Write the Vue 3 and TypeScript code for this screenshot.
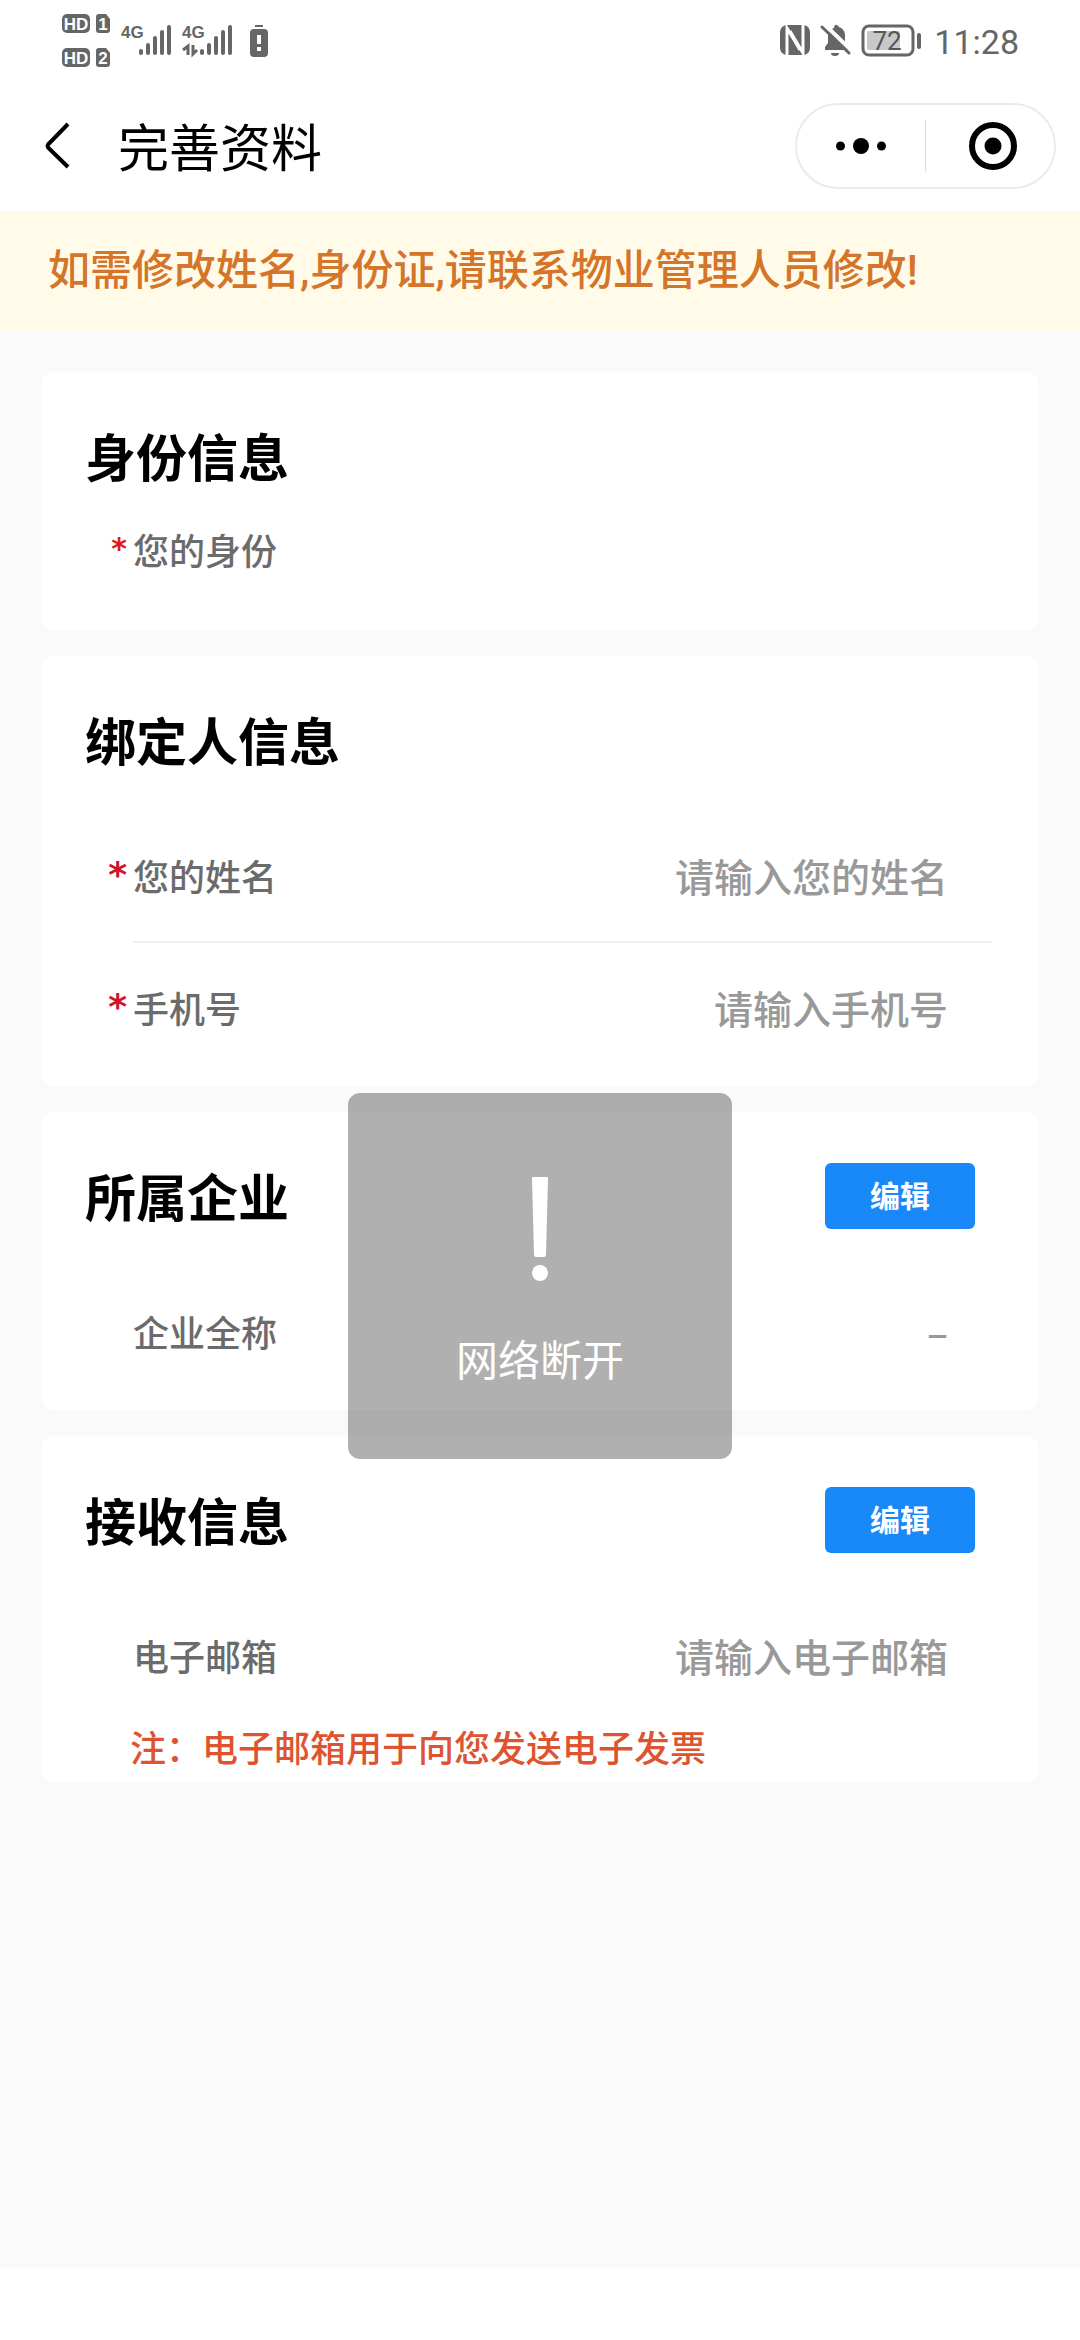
<script setup lang="ts">
import { ref } from 'vue'

interface Field {
  id: string
  label: string
  required?: boolean
  placeholder?: string
  value?: string
}

interface Section {
  title: string
  editable?: boolean
  compact?: boolean
  note?: string
  fields: Field[]
}

const sections: Section[] = [
  {
    title: '身份信息',
    compact: true,
    fields: [{ id: 'identity', label: '您的身份', required: true }],
  },
  {
    title: '绑定人信息',
    fields: [
      { id: 'name', label: '您的姓名', required: true, placeholder: '请输入您的姓名' },
      { id: 'phone', label: '手机号', required: true, placeholder: '请输入手机号' },
    ],
  },
  {
    title: '所属企业',
    editable: true,
    fields: [{ id: 'company', label: '企业全称', value: '–' }],
  },
  {
    title: '接收信息',
    editable: true,
    note: '注：电子邮箱用于向您发送电子发票',
    fields: [{ id: 'email', label: '电子邮箱', placeholder: '请输入电子邮箱' }],
  },
]

const form = ref<Record<string, string>>({ name: '', phone: '', email: '' })
const barTops = [49, 43, 36, 30, 25]
</script>

<template>
  <div class="app">
    <header>
      <div class="status">
        <svg class="status-left" width="220" height="80" viewBox="60 0 220 80">
          <g fill="#666">
            <rect x="62" y="14" width="28" height="19" rx="5" />
            <rect x="62" y="48" width="28" height="19" rx="5" />
            <path d="M99 14h7l4 5v11a3 3 0 0 1-3 3h-8a3 3 0 0 1-3-3V17a3 3 0 0 1 3-3z" />
            <path d="M99 48h7l4 5v11a3 3 0 0 1-3 3h-8a3 3 0 0 1-3-3V51a3 3 0 0 1 3-3z" />
          </g>
          <g class="tiny" fill="#fff" text-anchor="middle">
            <text x="76" y="30">HD</text>
            <text x="76" y="64">HD</text>
            <text x="103" y="30">1</text>
            <text x="103" y="64">2</text>
          </g>
          <g class="net" fill="#666">
            <text x="121" y="38">4G</text>
            <text x="182" y="38">4G</text>
          </g>
          <g stroke="#666" stroke-width="4" stroke-linecap="round">
            <line v-for="(t, i) in barTops" :key="'a' + i" :x1="141 + i * 7" :x2="141 + i * 7" :y1="t + 2" y2="53" />
            <line v-for="(t, i) in barTops" :key="'b' + i" :x1="202 + i * 7" :x2="202 + i * 7" :y1="t + 2" y2="53" />
          </g>
          <path d="M183 50l5-4v9M193 45v9l4-4" fill="none" stroke="#666" stroke-width="3" />
          <rect x="255" y="25" width="8" height="2" fill="#666" />
          <rect x="250" y="29" width="18" height="28" rx="4" fill="#666" />
          <path d="M257 35h4v9h-4zM257 47h4v4h-4z" fill="#fff" />
        </svg>
        <div class="status-right">
          <svg width="146" height="80" viewBox="778 0 146 80">
            <rect x="780" y="25" width="30" height="30" rx="7" fill="#666" />
            <path d="M787 55V28L800 50" fill="none" stroke="#fff" stroke-width="3" />
            <path d="M803 25V53L790 31" fill="none" stroke="#fff" stroke-width="3" />
            <path d="M825 50v-3l3-4v-7c0-4 3-7 6-8 0-4 3-4 5-1 5 2 6 5 6 9v7l3 4v3z" fill="#666" />
            <path d="M831 53h8a4 3 0 0 1-8 0z" fill="#666" />
            <path d="M824 24l28 27" stroke="#fff" stroke-width="4" />
            <path d="M822 27l27 26" stroke="#666" stroke-width="3" stroke-linecap="round" />
            <rect x="863" y="26" width="50" height="29" rx="6" fill="#fff" stroke="#666" stroke-width="3" />
            <rect x="867" y="31" width="33" height="19" rx="2" fill="#c8c8c8" />
            <rect x="917" y="33" width="4" height="16" rx="2" fill="#666" />
            <text class="level" x="887" y="50" text-anchor="middle" fill="#555">72</text>
          </svg>
          <time>11:28</time>
        </div>
      </div>
      <div class="nav">
        <button class="back" type="button" aria-label="返回">
          <svg width="28" height="48" viewBox="0 0 28 48">
            <path d="M24 2L4 22.500q-1 1.500 0 3L24 45" fill="none" stroke="#000" stroke-width="4" />
          </svg>
        </button>
        <h1>完善资料</h1>
        <div class="capsule">
          <button type="button" aria-label="更多">
            <svg width="52" height="18" viewBox="0 0 52 18">
              <circle cx="5.500" cy="9" r="4.500" />
              <circle cx="26" cy="9" r="8" />
              <circle cx="46.500" cy="9" r="4.500" />
            </svg>
          </button>
          <i class="split"></i>
          <button class="close" type="button" aria-label="关闭">
            <svg width="48" height="48" viewBox="0 0 48 48">
              <circle cx="24" cy="24" r="21" fill="none" stroke="#000" stroke-width="6" />
              <circle cx="24" cy="24" r="8.500" />
            </svg>
          </button>
        </div>
      </div>
    </header>

    <main>
      <p class="notice">如需修改姓名,身份证,请联系物业管理人员修改!</p>
      <form class="cards" @submit.prevent>
        <section v-for="s in sections" :key="s.title" class="card" :class="{ compact: s.compact }">
          <div class="head">
            <h2>{{ s.title }}</h2>
            <button v-if="s.editable" type="button" class="edit">编辑</button>
          </div>
          <div class="fields">
            <div v-for="f in s.fields" :key="f.id" class="row">
              <span class="star">{{ f.required ? '*' : '' }}</span>
              <div class="body">
                <label v-if="f.placeholder" :for="f.id">{{ f.label }}</label>
                <span v-else class="label">{{ f.label }}</span>
                <input v-if="f.placeholder" :id="f.id" v-model="form[f.id]" type="text" :placeholder="f.placeholder" />
                <span v-else-if="f.value" class="value">{{ f.value }}</span>
              </div>
            </div>
          </div>
          <p v-if="s.note" class="note">{{ s.note }}</p>
        </section>
      </form>

      <div class="overlay">
        <div class="toast" role="alert">
          <svg width="20" height="106" viewBox="0 0 20 106">
            <path d="M3 1h14q1 0 1 1l-2 77q0 2-2 2H6q-2 0-2-2L2 2q0-1 1-1z" fill="#fff" />
            <circle cx="10" cy="97" r="8" fill="#fff" />
          </svg>
          <span>网络断开</span>
        </div>
      </div>
    </main>
  </div>
</template>

<style>
body {
  margin: 0;
  background: #fff;
}
</style>

<style scoped>
.app {
  display: flex;
  flex-direction: column;
  min-height: 100vh;
  font-family: "Noto Sans CJK SC", "Noto Sans", sans-serif;
  color: #000;
}
h1, h2, p {
  margin: 0;
}
button {
  padding: 0;
  border: 0;
  background: none;
  font-family: inherit;
}
svg {
  display: block;
}
.status {
  display: flex;
  justify-content: space-between;
  height: 81px;
  padding: 0 61px 0 60px;
}
.status-right {
  display: flex;
  gap: 10px;
}
.status time {
  font: 34px/84px Roboto, sans-serif;
  color: #666;
}
.tiny {
  font: bold 17px "Liberation Sans Narrow", sans-serif;
}
.net {
  font: bold 17px "Liberation Sans Narrow", sans-serif;
}
.level {
  font: 26px Roboto, sans-serif;
}
.nav {
  display: flex;
  align-items: center;
  height: 130px;
  padding: 0 24px 0 44px;
}
.back {
  margin-right: 46px;
}
h1 {
  flex: 1;
  padding-bottom: 2px;
  font-size: 51px;
  line-height: 70px;
  font-weight: 400;
}
.capsule {
  display: flex;
  align-items: center;
  box-sizing: border-box;
  width: 261px;
  height: 86px;
  border: 2px solid #ebebeb;
  border-radius: 43px;
}
.capsule button {
  flex: 1;
  display: flex;
  justify-content: center;
}
.close svg {
  margin-left: 6px;
}
.split {
  width: 1px;
  height: 52px;
  background: #ddd;
}
main {
  position: relative;
  flex: 1;
  display: flex;
  flex-direction: column;
  padding-bottom: 72px;
}
.notice {
  padding: 24px 48px;
  background: #fffbe8;
  color: #d4752a;
  font-family: Roboto, "Noto Sans CJK SC", sans-serif;
  font-size: 42px;
  font-weight: 500;
  line-height: 72px;
}
.cards {
  flex: 1;
  display: flex;
  flex-direction: column;
  gap: 26px;
  padding: 41px 42px;
  background: #fafafa;
}
.card {
  padding: 48px 0 11px;
  background: #fff;
  border-radius: 12px;
}
.head {
  display: flex;
  align-items: center;
  justify-content: space-between;
  padding: 0 63px 0 43px;
}
h2 {
  padding-bottom: 2px;
  font-size: 51px;
  line-height: 70px;
  font-weight: 700;
}
.edit {
  width: 150px;
  height: 66px;
  padding-bottom: 5px;
  border-radius: 6px;
  background: #1989fa;
  color: #fff;
  font-size: 30px;
  font-weight: 700;
}
.fields {
  margin-top: 35px;
}
.row {
  display: flex;
  align-items: stretch;
  height: 132px;
  line-height: 128px;
  margin-right: 46px;
}
.star {
  box-sizing: border-box;
  width: 91px;
  padding-right: 6px;
  text-align: right;
  color: #d0142c;
  font-family: "DejaVu Sans", sans-serif;
  font-size: 36px;
  font-weight: 700;
}
.body {
  flex: 1;
  display: flex;
  align-items: center;
  box-sizing: border-box;
  min-width: 0;
  padding: 0 44px 2px 0;
  border-bottom: 2px solid transparent;
}
.row:not(:last-child) .body {
  border-color: #f0f0f0;
}
label,
.label {
  color: #6b6b6b;
  font-size: 36px;
  font-weight: 500;
}
input,
.value {
  flex: 1;
  min-width: 0;
  padding: 0;
  border: 0;
  outline: 0;
  background: none;
  color: #999;
  font-family: inherit;
  font-size: 39px;
  font-weight: 500;
  text-align: right;
}
input::placeholder {
  color: #999;
  opacity: 1;
}
.compact .fields {
  margin: 0 0 9px;
}
.compact .row {
  height: 118px;
  line-height: 114px;
}
.compact .star {
  color: #e01818;
  font-size: 30px;
}
.note {
  padding: 0 88px 2px;
  color: #dd5430;
  font-size: 36px;
  font-weight: 500;
  line-height: 46px;
}
.overlay {
  position: absolute;
  inset: 0;
  display: flex;
  align-items: center;
  justify-content: center;
}
.toast {
  display: flex;
  flex-direction: column;
  align-items: center;
  gap: 40px;
  box-sizing: border-box;
  width: 384px;
  height: 366px;
  padding-top: 83px;
  border-radius: 12px;
  background: rgba(0, 0, 0, 0.31);
  color: #fff;
  font-size: 42px;
  line-height: 72px;
}
</style>
